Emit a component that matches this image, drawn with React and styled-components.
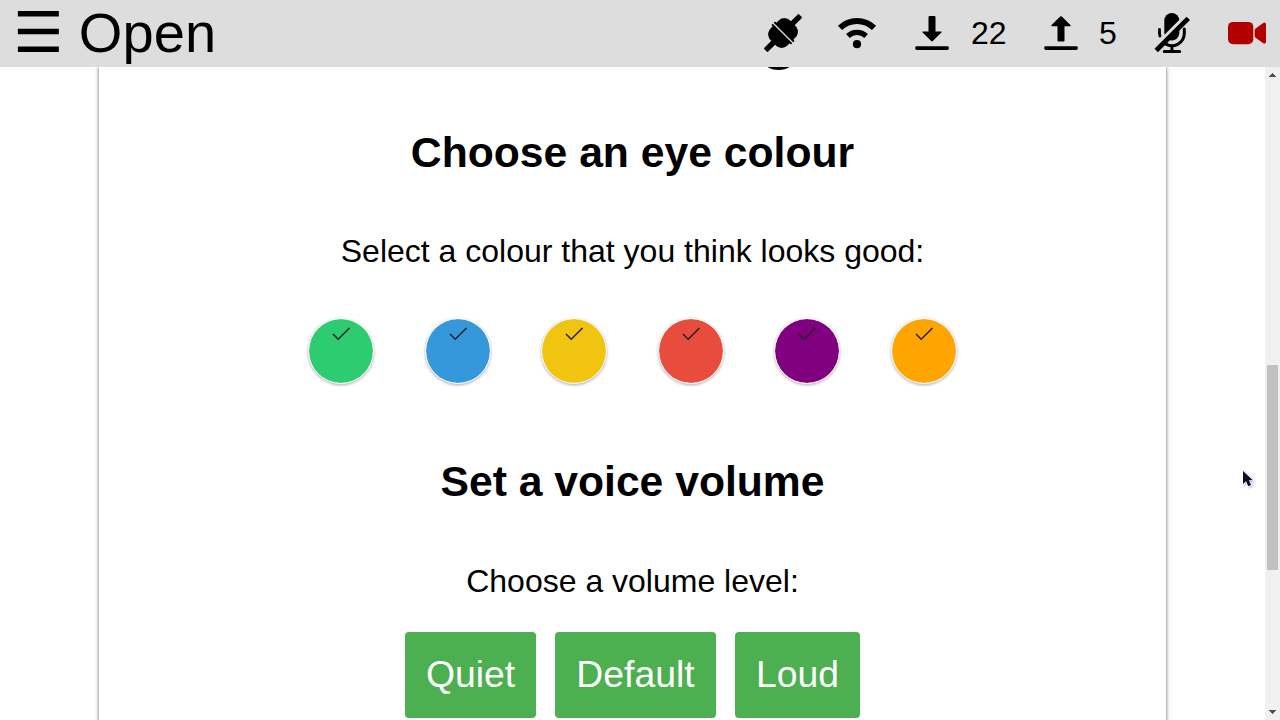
import React from 'react';
import styled, { createGlobalStyle } from 'styled-components';

const GlobalStyle = createGlobalStyle`
  *, *::before, *::after { box-sizing: border-box; }
  body {
    margin: 0;
    overflow: hidden;
    background: #fff;
    color: #000;
    font-family: 'Liberation Sans', Arial, sans-serif;
    font-size: 32px;
  }
`;

const Page = styled.div`
  position: relative;
  display: flex;
  flex-direction: column;
  height: 720px;
  width: 1280px;
  overflow: hidden;
`;

const TopBar = styled.header`
  display: flex;
  justify-content: space-between;
  align-items: flex-start;
  flex: none;
  height: 67px;
  padding: 0 13px 0 13px;
  background: #ddd;
`;

const MenuButton = styled.div`
  font-family: 'Liberation Sans', 'DejaVu Sans', sans-serif;
  font-size: 56.1px;
  line-height: 66px;
  height: 66px;
  white-space: pre;
`;

const StatusList = styled.div`
  display: flex;
  align-items: center;
  height: 66px;
`;

const StatusIcon = styled.svg`
  display: block;
  flex: none;
  width: 40px;
  height: 40px;
  margin-right: ${(p) => p.$gap || 0}px;
`;

const Count = styled.span`
  width: ${(p) => p.$width}px;
  margin-right: ${(p) => p.$gap}px;
  line-height: 36px;
`;

const Body = styled.div`
  display: flex;
  flex: 1;
  min-height: 0;
`;

const Viewport = styled.main`
  flex: 1;
  display: flex;
  justify-content: center;
  overflow: hidden;
`;

const Card = styled.section`
  display: flex;
  flex-direction: column;
  align-items: center;
  width: 1067px;
  height: 660px;
  box-shadow: 0 0 4px rgba(0, 0, 0, 0.6);
`;

const PageTitle = styled.h1`
  display: flex;
  align-items: flex-end;
  justify-content: flex-end;
  width: 333px;
  height: 4px;
  margin: 0 0 16px;
  font-size: 64px;
  line-height: 72px;
`;

const Title = styled.h2`
  margin: ${(p) => p.$top}px 0 0;
  font-size: 42.67px;
  line-height: 48px;
  white-space: nowrap;
`;

const Prompt = styled.p`
  margin: ${(p) => p.$top}px 0 0;
  line-height: 36px;
  white-space: nowrap;
`;

const Swatches = styled.div`
  display: flex;
  gap: 50.6px;
  margin-top: 49px;
`;

const Swatch = styled.div`
  width: 66px;
  height: 66px;
  padding: 8px 0 0 23px;
  border: 1px solid #fff;
  border-radius: 50%;
  background: ${(p) => p.$color};
  background-clip: padding-box;
  box-shadow: 0 1px 3px rgba(0, 0, 0, 0.33);
`;

const Check = styled.svg`
  display: block;
  width: 19px;
  height: 14px;
`;

const ButtonRow = styled.div`
  display: flex;
  gap: 19px;
  margin-top: 33px;
`;

const LevelButton = styled.button`
  width: ${(p) => p.$width}px;
  height: 86px;
  padding: 0 0 2px;
  border: 0;
  border-radius: 4px;
  background: #4caf50;
  color: #fff;
  font: 37.33px/44px 'Liberation Sans', Arial, sans-serif;
`;

const ScrollTrack = styled.div`
  display: flex;
  flex-direction: column;
  align-items: center;
  flex: none;
  width: 15px;
  padding: 6px 0;
  background: #f0f0f0;
`;

const ScrollArrow = styled.svg`
  display: block;
  width: 7px;
  height: 4px;
  fill: #505050;
`;

const ScrollThumb = styled.div`
  width: 11px;
  height: 205px;
  margin: 288px 0 140px;
  background: #c1c1c1;
`;

const Pointer = styled.svg`
  position: absolute;
  left: 1241px;
  top: 469px;
  width: 16px;
  height: 22px;
  filter: drop-shadow(1px 1px 1px rgba(0, 0, 0, 0.25));
`;

const COLOURS = ['#2ecc71', '#3498db', '#f1c40f', '#e74c3c', 'purple', 'orange'];

const LEVELS = [
  { label: 'Quiet', width: 131 },
  { label: 'Default', width: 161 },
  { label: 'Loud', width: 125 },
];

const PlugIcon = () => (
  <StatusIcon viewBox="0 0 40 40" $gap={34}>
    <g transform="translate(20 20) rotate(45)">
      <path d="M-2.7-23.6q0-1 1-1H1.7q1 0 1 1V-13.8H5Q12.2-12.2 12-4.6V-2.6H13.8V-.7H-13.8V-2.6H-12V-4.6Q-12.2-12.2-5-13.8H-2.7Z" />
      <path d="M-2.7 23.6q0 1 1 1H1.7q1 0 1-1V13.8H5Q12.2 12.2 12 4.6V2.6H13.8V.7H-13.8V2.6H-12V4.6Q-12.2 12.2-5 13.8H-2.7Z" />
    </g>
  </StatusIcon>
);

const WifiIcon = () => (
  <StatusIcon viewBox="0 0 40 40" $gap={35}>
    <g fill="none" stroke="#000">
      <path d="M3 14.9a24.5 24.5 0 0 1 34 0" strokeWidth="6" />
      <path d="M10.9 23a13.3 13.3 0 0 1 18.2 0" strokeWidth="5.4" />
    </g>
    <circle cx="20" cy="31.2" r="4.1" />
  </StatusIcon>
);

const DownIcon = () => (
  <StatusIcon viewBox="0 0 40 40" $gap={19}>
    <path d="M16.5 4.2q0-1.1 1.1-1.1h4.8q1.1 0 1.1 1.1V18.4h5.4q1.6 0 .5 1.2l-8.6 8.4q-.8.8-1.6 0l-8.6-8.4q-1.1-1.2.5-1.2h5.4Z" />
    <rect x="3.3" y="33.2" width="33.5" height="3.8" rx="1.4" />
  </StatusIcon>
);

const UpIcon = () => (
  <StatusIcon viewBox="0 0 40 40" $gap={18}>
    <path d="M16.5 27.4q0 1.1 1.1 1.1h4.8q1.1 0 1.1-1.1V13.2h5.4q1.6 0 .5-1.2l-8.6-8.4q-.8-.8-1.6 0l-8.6 8.4q-1.1 1.2.5 1.2h5.4Z" />
    <rect x="3.3" y="33.2" width="33.5" height="3.8" rx="1.4" />
  </StatusIcon>
);

const MicOffIcon = () => (
  <StatusIcon viewBox="0 0 40 40" $gap={35} overflow="visible">
    <rect x="12.3" y="0" width="15" height="27.5" rx="7.5" />
    <path d="M13.5 30.9a12.4 12.4 0 0 0 18.8-10.6v-4.2" fill="none" stroke="#000" strokeWidth="3" strokeLinecap="round" />
    <path d="M7.5 16.5v4.2l.5 2.4" fill="none" stroke="#000" strokeWidth="2.8" strokeLinecap="round" />
    <path d="M19.9 32v6" stroke="#000" strokeWidth="3" />
    <rect x="10.8" y="37.1" width="18.4" height="3" rx="1.5" />
    <path d="M9 27.6 28.6 8" stroke="#ddd" strokeWidth="3.4" />
    <path d="M5.9 35.8 34.6 7.1" stroke="#000" strokeWidth="4.8" strokeLinecap="square" />
  </StatusIcon>
);

const CameraIcon = () => (
  <StatusIcon viewBox="0 0 40 40" fill="#b20000">
    <rect x="1" y="8.9" width="25.3" height="22.3" rx="5" />
    <path d="M27.6 17.4q0-1.3 1-2l7.6-5.4q2.8-1.4 2.8 1.6v17q0 3-2.8 1.6l-7.6-5.4q-1-.7-1-2Z" />
  </StatusIcon>
);

export default function App() {
  return (
    <Page>
      <GlobalStyle />
      <TopBar>
        <MenuButton>☰ Open</MenuButton>
        <StatusList>
          <PlugIcon />
          <WifiIcon />
          <DownIcon />
          <Count $width={36} $gap={34}>22</Count>
          <UpIcon />
          <Count $width={18} $gap={35}>5</Count>
          <MicOffIcon />
          <CameraIcon />
        </StatusList>
      </TopBar>
      <Body>
        <Viewport>
          <Card>
            <PageTitle>g</PageTitle>
            <Title $top={41}>Choose an eye colour</Title>
            <Prompt $top={57}>Select a colour that you think looks good:</Prompt>
            <Swatches>
              {COLOURS.map((color) => (
                <Swatch key={color} $color={color}>
                  <Check viewBox="0 0 19 14" fill="none" stroke="#222" strokeWidth="1.5">
                    <path d="M1 7 6.2 12.3 17.5 1" />
                  </Check>
                </Swatch>
              ))}
            </Swatches>
            <Title $top={73}>Set a voice volume</Title>
            <Prompt $top={58}>Choose a volume level:</Prompt>
            <ButtonRow>
              {LEVELS.map(({ label, width }) => (
                <LevelButton key={label} $width={width}>{label}</LevelButton>
              ))}
            </ButtonRow>
          </Card>
        </Viewport>
        <ScrollTrack>
          <ScrollArrow viewBox="0 0 7 4"><path d="M3 0h1v1h1v1h1v1h1v1H0V3h1V2h1V1h1z" /></ScrollArrow>
          <ScrollThumb />
          <ScrollArrow viewBox="0 0 7 4"><path d="M0 0h7v1H6v1H5v1H4v1H3V3H2V2H1V1H0z" /></ScrollArrow>
        </ScrollTrack>
      </Body>
      <Pointer viewBox="0 0 16 22">
        <path d="M2 2v13l3-2.8 2.3 5 2.8-1.2-2.2-4.8h4Z" fill="#0c0c2c" stroke="#fff" strokeWidth="1.6" paintOrder="stroke" />
      </Pointer>
    </Page>
  );
}
